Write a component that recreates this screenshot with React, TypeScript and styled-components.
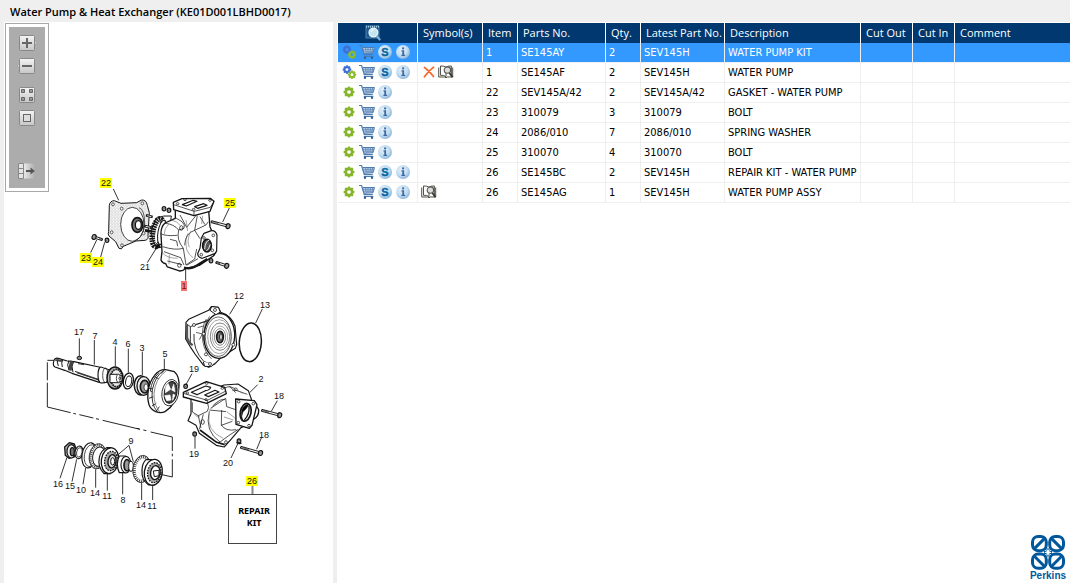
import React from "react";
import styled, { createGlobalStyle } from "styled-components";

const GlobalStyle = createGlobalStyle`
  * { box-sizing: border-box; }
  body {
    margin: 0;
    background: #efefef;
    color: #000;
    font: 11px/20px "DejaVu Sans Condensed", "Noto Sans", sans-serif;
  }
`;

const Page = styled.div`
  min-height: 100vh;
  display: flex;
  flex-direction: column;
`;

const Title = styled.h1`
  margin: 0;
  padding: 2px 10px 0;
  height: 22px;
  font: 600 11px/20px "Open Sans", sans-serif;
`;

const Workspace = styled.main`
  flex: 1;
  display: grid;
  grid-template-columns: 329px minmax(0, 1fr);
  gap: 4px;
  padding-left: 4px;
`;

const DrawingPanel = styled.section`
  position: relative;
  background: #fff;
`;

const Drawing = styled.svg`
  display: block;
  width: 100%;
  height: auto;
`;

const Toolbar = styled.div`
  position: absolute;
  top: 1px;
  left: 1px;
  width: 44px;
  padding: 3px;
  border: 1px solid #a8a8a8;
  background: #fff;
`;

const ToolbarFill = styled.div`
  display: flex;
  flex-direction: column;
  align-items: center;
  padding: 7px 0 8px;
  background: #acacac;
`;

const ToolButton = styled.button<{ $space?: number }>`
  display: block;
  width: 20px;
  height: 18px;
  margin: 0 0 ${(p) => p.$space ?? 0}px;
  padding: 0;
  border: 0;
  background: none;
  svg { display: block; }
`;

const PartsPanel = styled.section`
  display: flex;
  flex-direction: column;
  min-width: 0;
  padding: 1px 0 0 1px;
  background: #fff;
`;

const PartsTable = styled.table`
  width: 100%;
  table-layout: fixed;
  border-collapse: separate;
  border-spacing: 0;
`;

const HeadCell = styled.th`
  height: 20px;
  padding: 0 0 0 5px;
  border-right: 1px solid #fff;
  background: #00386f;
  color: #fff;
  font: 11px/20px "Open Sans", "Noto Sans", sans-serif;
  text-align: left;
  white-space: nowrap;
  &:last-child { border-right: 0; }
  &:first-child { padding: 0 10px 0 0; }
  svg { display: block; margin: 0 auto; }
`;

const Row = styled.tr<{ $selected?: boolean }>`
  background: ${(p) => (p.$selected ? "#3399ff" : "#fff")};
  color: ${(p) => (p.$selected ? "#fff" : "#000")};
`;

const Cell = styled.td`
  height: 20px;
  padding: 0 0 0 3px;
  border-right: 1px solid #efefef;
  border-bottom: 1px solid #efefef;
  line-height: 19px;
  white-space: nowrap;
  vertical-align: top;
  overflow: hidden;
  &:last-child { border-right: 0; }
`;

const IconStrip = styled.div<{ $gap: number }>`
  display: flex;
  align-items: center;
  gap: ${(p) => p.$gap}px;
  height: 18px;
`;

const IconButton = styled.button`
  width: 16px;
  height: 16px;
  padding: 0;
  border: 0;
  background: none;
  svg { display: block; }
`;

const Brand = styled.div`
  width: 40px;
  margin: auto 2px 1px auto;
  color: #00589c;
  font: bold 10px/12px "Liberation Sans", sans-serif;
  text-align: center;
  svg { display: block; margin: 0 auto; }
`;

/* ---------- icons ---------- */

const teeth = [0, 45, 90, 135, 180, 225, 270, 315];

const Cog = ({ x, y, r, color }: { x: number; y: number; r: number; color: string }) => (
  <g transform={`translate(${x} ${y})`}>
    {teeth.map((a) => (
      <rect key={a} x={-r * 0.22} y={-r} width={r * 0.44} height={r * 0.5} fill={color} transform={`rotate(${a})`} />
    ))}
    <circle r={r * 0.58} fill="none" stroke={color} strokeWidth={r * 0.48} />
  </g>
);

const GearIcon = () => (
  <svg width="16" height="16" viewBox="0 0 16 16"><Cog x={8} y={8} r={5.4} color="#86b52c" /></svg>
);

const GearsIcon = () => (
  <svg width="16" height="16" viewBox="0 0 16 16">
    <Cog x={6} y={5.6} r={4.3} color="#3f6fd6" />
    <Cog x={11} y={10.7} r={4.2} color="#8abb2c" />
  </svg>
);

const CartIcon = () => (
  <svg width="16" height="16" viewBox="0 0 16 16" fill="none" stroke="#4f7cb0">
    <path d="M0 1.500h2.600l2.600 9h8.600M4.800 12.400h9.500" strokeWidth="1.2" />
    <path d="M3.400 3.500h12.100l-1.500 5.300-9 .5z" fill="#c9d9ec" strokeWidth="1" />
    <path d="M4 5.300h11M4.500 7.200h10M6.500 3.500l.7 5.500M9 3.500v5.300M11.400 3.500l-.3 5.300M13.700 3.500l-.9 5.300" strokeWidth=".7" />
    <circle cx="6" cy="13.800" r="1.200" fill="#365f94" stroke="none" />
    <circle cx="13" cy="13.800" r="1.200" fill="#365f94" stroke="none" />
  </svg>
);

const Disc = ({ children }: { children: React.ReactNode }) => (
  <svg width="16" height="16" viewBox="0 0 16 16">
    <defs>
      <radialGradient id="disc" cx=".4" cy=".35" r=".7">
        <stop offset="0" stopColor="#e6f1fa" />
        <stop offset=".6" stopColor="#bfdcf1" />
        <stop offset="1" stopColor="#83aed6" />
      </radialGradient>
    </defs>
    <circle cx="8" cy="8" r="7" fill="url(#disc)" />
    {children}
  </svg>
);

const SIcon = () => (
  <Disc>
    <text x="8" y="12" textAnchor="middle" fontFamily="Liberation Sans" fontWeight="bold" fontSize="11" fill="#08679f" stroke="#08679f" strokeWidth=".4">S</text>
  </Disc>
);

const InfoIcon = () => (
  <Disc>
    <path d="M6.400 6.300h2.700v4.500h1v1.200H6.400v-1.200h.9V7.400h-.9z" fill="#3f69a3" />
    <circle cx="8.100" cy="4.400" r="1.100" fill="#3f69a3" />
  </Disc>
);

const CrossIcon = () => (
  <svg width="16" height="16" viewBox="0 0 16 16">
    <path d="M3.500 3.500q5 3.500 9 9M12.600 3.200Q7 7.500 3.400 12.800" fill="none" stroke="#f4692b" strokeWidth="1.7" strokeLinecap="round" />
  </svg>
);

const BookIcon = () => (
  <svg width="16" height="16" viewBox="0 0 16 16" fill="none" stroke="#55534c">
    <path d="M.7 3.500V13h6l1.300.8 1.300-.8h5.400V3.500M2.500 11.300V2q3.500-.3 5.500 1.200Q10 1.700 13.400 2v9.300" fill="#f4f3ef" />
    <path d="M2.500 11.300q3.500-.4 5.500 1.400V3.200" />
    <circle cx="9.400" cy="6.100" r="3.200" fill="#d9dcda" strokeWidth="1.1" />
    <path d="m11.500 9 3 4.200" stroke="#34332f" strokeWidth="1.8" />
  </svg>
);

const PreviewIcon = () => (
  <svg width="18" height="18" viewBox="0 0 18 18">
    <rect x="2" y="2" width="13" height="12" fill="#1d588d" stroke="#5c93bd" strokeWidth=".8" />
    <path d="M2 2.600h13" stroke="#a5cbe2" strokeDasharray="1 1" strokeWidth="1.6" />
    <circle cx="9.400" cy="8.600" r="4.400" fill="#c5e2f1" stroke="#f2fafd" strokeWidth="1.2" />
    <path d="M7 8q.8-2.300 3-2.100" fill="none" stroke="#fff" />
    <path d="m12.600 12 3.600 4" stroke="#83b2d4" strokeWidth="2" />
  </svg>
);

const ToolFace = ({ children, tab }: { children?: React.ReactNode; tab?: "left" | "right" }) => (
  <svg width="20" height="18" viewBox="0 0 20 18">
    <defs>
      <linearGradient id="face" x1="0" y1="0" x2="0" y2="1">
        <stop offset="0" stopColor="#f4f4f4" />
        <stop offset="1" stopColor="#c6c6c6" />
      </linearGradient>
    </defs>
    {tab === "right" && <path d="m17 6 2.500 2.700L17 11.500z" fill="#ededed" stroke="#8a8a8a" strokeWidth=".6" />}
    {tab === "left" && <path d="m3 6-2.500 2.700L3 11.500z" fill="#ededed" stroke="#8a8a8a" strokeWidth=".6" />}
    <rect x="2.500" y="1.500" width="15" height="15" rx="1" fill="url(#face)" stroke="#888" />
    {children}
  </svg>
);

const ExportFace = () => (
  <svg width="20" height="18" viewBox="0 0 20 18">
    <defs>
      <linearGradient id="fade">
        <stop offset="0" stopColor="#eee" />
        <stop offset="1" stopColor="#acacac" />
      </linearGradient>
    </defs>
    <path d="M6 1.500h12v15H6z" fill="url(#fade)" />
    <path d="M1.500 1.500h5v15h-5zM1.500 6.500h5M1.500 11.500h5" fill="#e4e4e4" stroke="#888" />
    <path d="M9 9h6" stroke="#555" strokeWidth="2" />
    <path d="m13.500 5.400 4.400 3.600-4.400 3.600z" fill="#555" />
  </svg>
);

const PerkinsMark = () => (
  <svg width="34" height="35" viewBox="0 0 34 35" fill="none" stroke="currentColor">
    {[[8.4, 8.6, 1], [25.6, 8.6, -1], [8.4, 26.2, -1], [25.6, 26.2, 1]].map(([x, y, s]) => (
      <g key={`${x}-${y}`} transform={`translate(${x} ${y}) scale(${s} 1)`}>
        <rect x="-6.900" y="-7.100" width="13.800" height="14.200" rx="5.600" strokeWidth="3" />
        <path d="M-5 5 5-5" strokeWidth="3" />
      </g>
    ))}
    <path d="M13 17.400h8M17 13.400v8" stroke="currentColor" strokeWidth="3" />
    <path d="m17 13.600 1.200 2.600 2.600 1.200-2.600 1.200-1.200 2.600-1.200-2.600-2.600-1.200 2.600-1.200z" fill="#fff" stroke="none" />
  </svg>
);

/* ---------- exploded view ---------- */

type Label = [string, number, number];

const labels: Label[] = [
  ["21", 145, 270], ["12", 239, 299], ["13", 265, 308], ["19", 194, 372], ["2", 261, 382],
  ["18", 279, 399], ["18", 264, 438], ["19", 194, 457], ["20", 228, 466], ["17", 79, 335],
  ["7", 95, 339], ["4", 115, 345], ["6", 128, 347], ["3", 142, 351], ["5", 165, 357],
  ["16", 58, 487], ["15", 70, 489], ["10", 81, 493], ["14", 95, 496], ["11", 107, 499],
  ["8", 123, 503], ["14", 141, 508], ["11", 152, 509], ["9", 131, 444],
];

const hotspots: Label[] = [["22", 106, 187], ["25", 230, 207], ["23", 86, 262], ["24", 98, 266], ["26", 252, 485]];

const Bolt = ({ x, y, length, angle }: { x: number; y: number; length: number; angle: number }) => (
  <g transform={`translate(${x} ${y}) rotate(${angle})`}>
    <rect x="0" y="-3" width={length} height="6" fill="#fff" strokeWidth="2.6" />
    <path d={`M0 0h${length * 0.45}`} strokeWidth="4" strokeDasharray="2 1.5" />
    <ellipse cx={length + 4} cy="0" rx="6" ry="7.500" fill="#999" strokeWidth="3.5" />
  </g>
);

const Nut = ({ x, y }: { x: number; y: number }) => (
  <g>
    <ellipse cx={x} cy={y} rx="5.500" ry="6.500" fill="#aaa" strokeWidth="3.5" />
    <path d={`M${x - 2} ${y + 1}l4-3`} strokeWidth="2" />
  </g>
);

const UpperPump = () => (
  <g transform="translate(70 170) scale(.3333)">
    <path d="M118 106q2-14 15-14l20 8 47-2 15-8q14-1 17 16l6 22-4 68q3 12-8 15l-28 2-38 16q-5 12-13 6l-10-20-20-17q-4-6-1-14z" fill="url(#stipple)" strokeWidth="3" />
    <ellipse cx="187" cy="163" rx="35" ry="51" fill="#fff" strokeWidth="2.4" />
    <path d="M207 113q17 5 17 48-2 40-28 50" strokeWidth="2" />
    <ellipse cx="202" cy="165" rx="16" ry="22" fill="#777" strokeWidth="5" />
    <ellipse cx="205" cy="165" rx="9" ry="13" fill="#fff" strokeWidth="4" />
    {[[129, 103], [155, 116], [217, 100], [125, 187], [156, 226], [221, 190]].map(([x, y]) => (
      <ellipse key={x} cx={x} cy={y} rx="4" ry="4.500" fill="#fff" strokeWidth="2" />
    ))}
    <path d="m228 136 20 5M223 168l22 5M225 181l17 3" strokeWidth="8" />
    <path d="m232 137 12 3M227 169l14 3" stroke="#ddd" strokeWidth="3" />
    <path d="M258 145q22-10 46-7l-12 90-30 6q-20-25-17-55z" fill="#fff" strokeWidth="3" />
    <ellipse cx="264" cy="188" rx="16" ry="42" transform="rotate(10 264 188)" strokeWidth="17" strokeDasharray="5 2.200" />
    <ellipse cx="276" cy="187" rx="12" ry="37" transform="rotate(10 276 187)" fill="#fff" strokeWidth="3" />
    <path d="M316 120v25l-31 14q-13 12-12 35l3 50-3 26q4 10 14 11l5 10 36 12q10 1 20-8l40-9 42-28q8-7 8-18l-2-30-16-40-4-48z" fill="#fff" strokeWidth="4" />
    <path d="m310 97 26-11 85-1 11 9-12 30-48 13-61-18z" fill="#fff" strokeWidth="4" />
    <path d="m311 104 62 20 48-12 10-15M372 124v13" strokeWidth="2.2" />
    <path d="m337 104 33-13 11 3-32 14zM374 110l27-9 10 5-28 9z" fill="#fff" strokeWidth="3.5" />
    <ellipse cx="323" cy="101" rx="4" ry="3" /><ellipse cx="345" cy="89" rx="4" ry="3" />
    <ellipse cx="420" cy="91" rx="4" ry="3" /><ellipse cx="371" cy="118" rx="4" ry="3" />
    <path d="M285 160q27 2 41 20l16-5q5-10-6-20l-20-12M326 180q-7 30 14 55-24 7-62-5M274 192q14 7 48 4M330 135l20 37 30-38M382 137l-8 44 34-16 7-10M374 181q-28 8-30 45M374 181l16 25M340 235l8 50 26-18 6-30M282 245l50 18 10 22M292 273l44 11M350 286l34-20M300 208l20 5 3 16M390 140l15 24" strokeWidth="2.2" />
    <path d="M354 190q-10 18-4 48 6 17 19 25M362 184q-13 30-4 48M276 247q14 18 47 18M298 255l-1 28M304 150q20 5 26 16M348 150l5 33M398 137l-3 25M296 163q-14 12-13 30" stroke="#555" strokeWidth="1.6" />
    <ellipse cx="334" cy="174" rx="5" ry="7" /><ellipse cx="328" cy="286" rx="5" ry="6" />
    <path d="m394 204 8-14 22-8q13-1 17 13l-1 48q-4 10-14 11l-29 11q-13-2-14-14l7-16z" fill="#fff" strokeWidth="3.5" />
    <ellipse cx="411" cy="227" rx="13" ry="19" fill="#555" strokeWidth="5" />
    <path d="M404 238q2-25 14-28M409 243q7-3 12-20" stroke="#eee" strokeWidth="3" />
    {[[402, 204], [430, 196], [427, 241], [394, 254]].map(([x, y]) => <circle key={x} cx={x} cy={y} r="4" fill="#fff" />)}
    <path d="M342 293q22 5 35-4l35-22" strokeWidth="7" />
    <Nut x={282} y={116} /><Nut x={297} y={121} />
    <Bolt x={424} y={155} length={48} angle={15} />
    <Bolt x={438} y={277} length={30} angle={18} />
    <Nut x={423} y={272} />
    <Bolt x={97} y={209} length={22} angle={198} />
    <Nut x={111} y={211} />
    <path d="m130 57 16 34M478 114l-20 42M104 217l-12 44M80 210l-18 38M263 228l-31 50M347 296v36" strokeWidth="2.6" />
    <circle cx="264" cy="228" r="5" fill="#111" />
  </g>
);

const LowerPump = () => (
  <g transform="translate(150 285) scale(.3333)">
    <path d="m108 112 8-9 60-27 8-11 21 2 7 15q31 9 43 41l5 56-4 11-40 25-23 23-17 9-15-6-26-34-15-23-13-22z" fill="#fff" strokeWidth="3.5" />
    <path d="m109 116 12 9v55M121 125l56-20M132 147q-4 47 30 83l23 7" strokeWidth="2.6" />
    <path d="M111 120v37q3 15 17 24" strokeWidth="7" stroke="#555" />
    <ellipse cx="208" cy="153" rx="46" ry="67" transform="rotate(3 208 153)" fill="#fff" strokeWidth="4" />
    <ellipse cx="205" cy="155" rx="39" ry="59" strokeWidth="2" />
    <ellipse cx="208" cy="155" rx="35" ry="51" stroke="#777" strokeWidth="2" />
    <ellipse cx="210" cy="155" rx="29" ry="41" strokeWidth="1.6" />
    <ellipse cx="210" cy="156" rx="23" ry="33" stroke="#888" strokeWidth="2" />
    <ellipse cx="210" cy="156" rx="17" ry="25" strokeWidth="1.6" />
    <ellipse cx="210" cy="156" rx="10" ry="17" fill="#777" strokeWidth="5" />
    <ellipse cx="213" cy="156" rx="4" ry="10" fill="#fff" strokeWidth="3" />
    <path d="M169 102q-15 25-11 65 6 36 27 55M179 94q-22 30-17 74M137 118l34-9M143 128l17-5M138 142l19 5-9 17" strokeWidth="2" />
    <path d="m180 76 5-11 20 2 6 14-13 8zM160 231l4 13 20 1 9-10" fill="#fff" strokeWidth="3" />
    {[[195, 75], [132, 120], [161, 146], [168, 208], [180, 237], [250, 179]].map(([x, y]) => <circle key={x} cx={x} cy={y} r="4.500" fill="#fff" />)}
    <ellipse cx="301" cy="172" rx="33" ry="58" transform="rotate(4 301 172)" strokeWidth="4.5" />

    <path d="m222 300 42-3 31 20 9 25 4 61q-20 19-35 25l-30 35-20 23-24-5-51-36-10-24-24-14 9-21v-48z" fill="#fff" strokeWidth="3.5" />
    <path d="m100 322 69-32 55 17 5 19-59 29-70-19z" fill="#fff" strokeWidth="4" />
    <path d="m100 325 72 21 56-28M172 346v10" strokeWidth="2.2" />
    <path d="m124 322 43-19 15 4q-3 9-16 10l-25 12zM164 330l31-14 12 5-32 14z" fill="#fff" strokeWidth="3.5" />
    <ellipse cx="112" cy="324" rx="4" ry="3" /><ellipse cx="170" cy="295" rx="4" ry="3" />
    <ellipse cx="217" cy="310" rx="4" ry="3" /><ellipse cx="168" cy="344" rx="4" ry="3" />
    <path d="M127 352v29l21 13M173 355q6 13-1 24l-27 13 8 37M182 370l45-30M178 375l50 5M227 340l3 25 30 10M224 309q20-10 34 7l34 12M238 303l19 20M178 379q-15 60 32 92M205 475l31-23 29-19M160 388l-12 45M215 375l-1 46 33-12M214 420q12 20 45 14M188 363q24-24 37-19" strokeWidth="2.2" />
    <path d="M177 388q-8 50 43 72M230 380l30 23M246 317q18-5 32 8M183 370l22-18M222 396l28 9M133 388l15 12" stroke="#666" strokeWidth="1.8" />
    <ellipse cx="158" cy="411" rx="5" ry="7" /><ellipse cx="228" cy="472" rx="4" ry="5" /><ellipse cx="257" cy="313" rx="5" ry="4" />
    <path d="M308 361q13-1 18 14 1 20-16 28z" fill="#fff" strokeWidth="4" />
    <path d="m257 342 56 5 8 12-15 62-8 9-40-12z" fill="#fff" strokeWidth="4" />
    <ellipse cx="287" cy="382" rx="16" ry="27" fill="#fff" strokeWidth="5" transform="rotate(12 287 382)" />
    <path d="M296 357q-4 14-17 23l-6 20 5 7q-8-26 2-40 7-9 16-10z" fill="#000" strokeWidth="2" />
    <path d="M297 362q3 26-14 43" strokeWidth="4" />
    {[[266, 350], [310, 356], [265, 413], [297, 422]].map(([x, y]) => <circle key={x} cx={x} cy={y} r="4" fill="#fff" />)}
    <path d="M150 435l50 37 24 7" strokeWidth="5" />
    <Nut x={107} y={304} /><Nut x={134} y={447} /><Nut x={267} y={468} />
    <path d="M260 472q4 6 14 1" strokeWidth="5" />
    <Bolt x={335} y={376} length={52} angle={15} />
    <Bolt x={272} y={487} length={58} angle={16} />
    <path d="m263 48-24 40M337 72l-20 42M126 266l-17 31M323 299l-23 23M382 347l-18 32M334 459l-14 34M135 454v37M263 477l-20 42" strokeWidth="2.6" />
  </g>
);

const Shaft = () => (
  <g transform="translate(30 320) scale(.3333)">
    <path d="M72 121q3-9 13-6l27 8 20 2 75 16 22 8-5 39-16-1-82-27-22-9-29-10q-8-4-3-20z" fill="#fff" strokeWidth="3.5" />
    <path d="M85 115q-6 11 0 23M98 119q-5 10-1 22M117 121q-8 13 0 29M131 124q-9 15-2 33" strokeWidth="3" />
    <path d="m76 120 20 3M123 122l-6 29M127 124l-5 28" strokeWidth="6" stroke="#444" />
    <path d="M135 154l73 25M140 158l65 22M144 131l18 3" strokeWidth="2.6" />
    <ellipse cx="148" cy="114" rx="7" ry="5" fill="#888" strokeWidth="3" />
    <ellipse cx="213" cy="165" rx="9" ry="24" fill="#fff" strokeWidth="3.5" />
    <path d="M215 142l25 8v36l-25 3" fill="#fff" strokeWidth="3" />
    <ellipse cx="226" cy="166" rx="8" ry="22" />
    <ellipse cx="255" cy="174" rx="24" ry="33" fill="#bbb" strokeWidth="4.5" />
    <ellipse cx="259" cy="174" rx="17" ry="26" fill="#eee" strokeWidth="5" strokeDasharray="5 2" />
    <path d="M240 163h26l10 5v14l-10 6h-26z" fill="#fff" strokeWidth="3" />
    <ellipse cx="265" cy="175" rx="6" ry="12" fill="#fff" /><circle cx="269" cy="175" r="3" />
    <ellipse cx="295" cy="183" rx="15" ry="24" transform="rotate(10 295 183)" fill="#fff" strokeWidth="4" />
    <ellipse cx="296" cy="184" rx="9" ry="16" transform="rotate(10 296 184)" fill="#fff" strokeWidth="3" />
    <ellipse cx="332" cy="196" rx="19" ry="29" fill="#fff" strokeWidth="4.5" />
    <ellipse cx="341" cy="198" rx="20" ry="28" fill="#eee" strokeWidth="4" />
    <ellipse cx="344" cy="200" rx="13" ry="19" fill="#999" strokeWidth="5" />
    <ellipse cx="348" cy="202" rx="6" ry="10" fill="#fff" />
    <path d="M374 166q14-18 33-17l26 6q16 13 14 45-6 53-42 75-12 6-28 0-16-8-20-21-6-20-2-44 4-26 19-44z" fill="#fff" strokeWidth="4" />
    <path d="M403 151q-26 13-36 58-5 45 15 66M387 158q-22 21-26 55l6 3M402 151l-9 10M374 170l13 7M357 205l12 2M357 235l13-5M366 258l13-8M379 274l9-14" strokeWidth="2.6" />
    <path d="M408 153q-32 22-36 68 0 36 17 54" stroke="#888" strokeWidth="3" />
    <ellipse cx="421" cy="218" rx="25" ry="40" transform="rotate(10 421 218)" fill="#fff" strokeWidth="2.4" />
    <ellipse cx="422" cy="217" rx="19" ry="33" transform="rotate(10 422 217)" fill="#444" strokeWidth="3" />
    <path d="m414 190 8 18-16 10 1-17zM431 193l4 22-10-5zM404 227l16-2 3 15-13 2zM429 223l6 2-7 16z" fill="#fff" stroke="#fff" strokeWidth="2" />
    <path d="M148 55v54M193 60v74M256 79v60M295 86v72M337 95v70M403 116v34" strokeWidth="2.6" />
    <path d="M72 121H52M52 127v54M52 188v73l70 17M130 280l8 2M148 284l42 10M198 296l9 2M218 301l112 27" strokeWidth="2.8" />
  </g>
);

const Bearings = () => (
  <g transform="translate(30 420) scale(.3333)">
    <path d="m320 25 9 2M340 30l9 2M362 36l65 15v42M427 101v8M427 118v53l-40-9" strokeWidth="2.8" />
    <path d="m104 81 14-13 15 4 7 20-5 18-18 5-11-9z" fill="#bbb" strokeWidth="4" />
    <ellipse cx="124" cy="94" rx="13" ry="20" fill="#eee" strokeWidth="3.5" />
    <ellipse cx="127" cy="95" rx="6" ry="12" fill="#777" strokeWidth="4" />
    <ellipse cx="147" cy="97" rx="12" ry="19" transform="rotate(8 147 97)" fill="#fff" strokeWidth="3.5" />
    <ellipse cx="148" cy="97" rx="8" ry="14" transform="rotate(8 148 97)" strokeWidth="2.2" />
    <ellipse cx="178" cy="106" rx="22" ry="38" transform="rotate(9 178 106)" fill="#fff" strokeWidth="3.5" />
    <ellipse cx="182" cy="107" rx="19" ry="33" transform="rotate(9 182 107)" strokeWidth="2.2" />
    <ellipse cx="203" cy="109" rx="25" ry="38" transform="rotate(9 203 109)" fill="#fff" strokeWidth="2.4" />
    <ellipse cx="203" cy="109" rx="22" ry="34" transform="rotate(9 203 109)" stroke="#444" strokeWidth="9" strokeDasharray="3 3" />
    <ellipse cx="207" cy="110" rx="19" ry="29" transform="rotate(9 207 110)" fill="#fff" strokeWidth="3" />
    <path d="M230 83h12v78h-20q-20-20-14-48 4-22 22-30z" fill="#fff" strokeWidth="3.5" />
    <ellipse cx="240" cy="122" rx="26" ry="39" transform="rotate(8 240 122)" fill="#fff" strokeWidth="4" />
    <ellipse cx="243" cy="123" rx="19" ry="29" transform="rotate(8 243 123)" fill="#aaa" strokeWidth="4" strokeDasharray="5 3" />
    <ellipse cx="246" cy="124" rx="12" ry="20" transform="rotate(8 246 124)" fill="#ddd" strokeWidth="4" />
    <ellipse cx="248" cy="124" rx="6" ry="11" fill="#fff" strokeWidth="3" />
    <path d="M268 108h18v50h-18q-12-25 0-50z" fill="#fff" strokeWidth="3.5" />
    <ellipse cx="288" cy="134" rx="15" ry="25" fill="#fff" strokeWidth="3.5" />
    <ellipse cx="291" cy="136" rx="9" ry="17" fill="#999" strokeWidth="5" />
    <ellipse cx="303" cy="139" rx="7" ry="15" fill="#fff" strokeWidth="3" />
    <ellipse cx="336" cy="147" rx="27" ry="41" transform="rotate(8 336 147)" fill="#fff" strokeWidth="2.4" />
    <ellipse cx="336" cy="147" rx="23" ry="36" transform="rotate(8 336 147)" stroke="#444" strokeWidth="9" strokeDasharray="3 3" />
    <path d="M348 119h18l8 76h-18q-22-15-20-43 0-22 12-33z" fill="#fff" strokeWidth="3.5" />
    <ellipse cx="370" cy="157" rx="27" ry="39" transform="rotate(8 370 157)" fill="#fff" strokeWidth="4" />
    <ellipse cx="373" cy="158" rx="20" ry="30" transform="rotate(8 373 158)" fill="#aaa" strokeWidth="4" strokeDasharray="5 3" />
    <ellipse cx="376" cy="158" rx="14" ry="21" transform="rotate(8 376 158)" fill="#fff" strokeWidth="4" />
    <path d="m370 153 17-2v16l-14 3z" fill="#fff" strokeWidth="3" />
    <path d="m111 112-21 63M140 118l-14 67M167 144l-8 49M197 148v55M232 160v52M278 158v65M335 188v52M368 197v43M297 76l-35 30M297 76l13 49" strokeWidth="2.6" />
  </g>
);

const ExplodedView = () => (
  <Drawing viewBox="4 22 329 561" role="img" aria-label="Water pump exploded view">
    <defs>
      <pattern id="stipple" width="9" height="9" patternUnits="userSpaceOnUse">
        <rect width="9" height="9" fill="#f6f6f6" />
        <path d="M1 2h2M6 1h1M4 5h1M7 6h2M1 8h1M5 8h1" stroke="#888" strokeWidth="1.4" />
      </pattern>
    </defs>
    <g fill="none" stroke="#151515" strokeWidth="2.2" strokeLinejoin="round">
      <UpperPump />
      <LowerPump />
      <Shaft />
      <Bearings />
    </g>
    <path d="M252.500 486v8" stroke="#888" strokeWidth="2" />
    <rect x="228.500" y="494.500" width="48" height="49" fill="#fff" stroke="#444" />
    <g fontFamily="Noto Sans" fontWeight="bold" fontSize="9" textAnchor="middle">
      <text x="254" y="514">REPAIR</text>
      <text x="254" y="526">KIT</text>
    </g>
    <g fontFamily="Liberation Sans" fontSize="9" textAnchor="middle" fill="#111">
      {labels.map(([t, x, y]) => <text key={`${x}-${y}`} x={x} y={y}>{t}</text>)}
      {hotspots.map(([t, x, y]) => (
        <g key={t}>
          <rect x={x - 6} y={y - 9} width="12" height="10" fill="#ff0" />
          <text x={x} y={y - 1}>{t}</text>
        </g>
      ))}
      <rect x="181" y="281" width="6" height="10" fill="#f87474" />
      <text x="184" y="289" fill="#7a1515">1</text>
    </g>
  </Drawing>
);

/* ---------- parts list ---------- */

interface Part {
  item: string;
  no: string;
  qty: string;
  latest: string;
  text: string;
  kit?: boolean;
  sub?: boolean;
  cross?: boolean;
  book?: boolean;
}

const parts: Part[] = [
  { item: "1", no: "SE145AY", qty: "2", latest: "SEV145H", text: "WATER PUMP KIT", kit: true, sub: true },
  { item: "1", no: "SE145AF", qty: "2", latest: "SEV145H", text: "WATER PUMP", kit: true, sub: true, cross: true, book: true },
  { item: "22", no: "SEV145A/42", qty: "2", latest: "SEV145A/42", text: "GASKET - WATER PUMP" },
  { item: "23", no: "310079", qty: "3", latest: "310079", text: "BOLT" },
  { item: "24", no: "2086/010", qty: "7", latest: "2086/010", text: "SPRING WASHER" },
  { item: "25", no: "310070", qty: "4", latest: "310070", text: "BOLT" },
  { item: "26", no: "SE145BC", qty: "2", latest: "SEV145H", text: "REPAIR KIT - WATER PUMP", sub: true },
  { item: "26", no: "SE145AG", qty: "1", latest: "SEV145H", text: "WATER PUMP ASSY", sub: true, book: true },
];

const headings = ["Symbol(s)", "Item", "Parts No.", "Qty.", "Latest Part No.", "Description", "Cut Out", "Cut In", "Comment"];
const columnWidths = [80, 65, 35, 88, 35, 84, 136, 52, 42];

export default function App() {
  return (
    <Page>
      <GlobalStyle />
      <Title>Water Pump &amp; Heat Exchanger (KE01D001LBHD0017)</Title>
      <Workspace>
        <DrawingPanel>
          <ExplodedView />
          <Toolbar role="toolbar" aria-label="Drawing tools">
            <ToolbarFill>
              <ToolButton $space={5} aria-label="Zoom in">
                <ToolFace tab="right"><path d="M5 9h10M10 4v10" stroke="#666" strokeWidth="2" /></ToolFace>
              </ToolButton>
              <ToolButton $space={11} aria-label="Zoom out">
                <ToolFace tab="left"><path d="M5 9h10" stroke="#666" strokeWidth="2" /></ToolFace>
              </ToolButton>
              <ToolButton $space={5} aria-label="Fit to window">
                <ToolFace>
                  <path d="M4.500 3.500h3v3h-3zM12.500 3.500h3v3h-3zM4.500 11.500h3v3h-3zM12.500 11.500h3v3h-3z" fill="#999" stroke="#666" />
                </ToolFace>
              </ToolButton>
              <ToolButton $space={35} aria-label="Actual size">
                <ToolFace><rect x="6.500" y="5.500" width="7" height="7" fill="#ddd" stroke="#666" /></ToolFace>
              </ToolButton>
              <ToolButton aria-label="Hide panel"><ExportFace /></ToolButton>
            </ToolbarFill>
          </Toolbar>
        </DrawingPanel>
        <PartsPanel>
          <PartsTable>
            <colgroup>
              {columnWidths.map((w, i) => <col key={i} width={w} />)}
              <col />
            </colgroup>
            <thead>
              <tr>
                <HeadCell aria-label="Actions"><PreviewIcon /></HeadCell>
                {headings.map((h) => <HeadCell key={h}>{h}</HeadCell>)}
              </tr>
            </thead>
            <tbody>
              {parts.map((p, i) => (
                <Row key={p.no} $selected={i === 0}>
                  <Cell>
                    <IconStrip $gap={2}>
                      <IconButton aria-label="Part type">{p.kit ? <GearsIcon /> : <GearIcon />}</IconButton>
                      <IconButton aria-label="Add to cart"><CartIcon /></IconButton>
                      {p.sub && <IconButton aria-label="Supersession"><SIcon /></IconButton>}
                      <IconButton aria-label="Information"><InfoIcon /></IconButton>
                    </IconStrip>
                  </Cell>
                  <Cell>
                    <IconStrip $gap={1}>
                      {p.cross && <CrossIcon />}
                      {p.book && <BookIcon />}
                    </IconStrip>
                  </Cell>
                  <Cell>{p.item}</Cell>
                  <Cell>{p.no}</Cell>
                  <Cell>{p.qty}</Cell>
                  <Cell>{p.latest}</Cell>
                  <Cell>{p.text}</Cell>
                  <Cell />
                  <Cell />
                  <Cell />
                </Row>
              ))}
            </tbody>
          </PartsTable>
          <Brand>
            <PerkinsMark />
            Perkins
          </Brand>
        </PartsPanel>
      </Workspace>
    </Page>
  );
}
